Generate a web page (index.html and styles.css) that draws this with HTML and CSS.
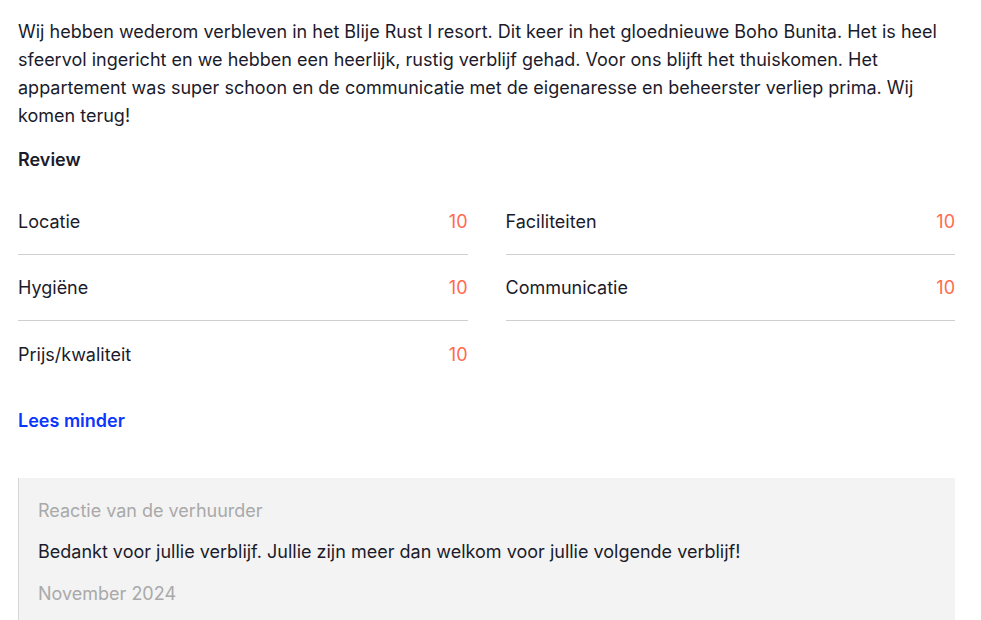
FILE: index.html
```html
<!DOCTYPE html>
<html lang="nl">
<head>
    <meta charset="UTF-8">
    <meta name="viewport" content="width=device-width, initial-scale=1.0">
    <title>Review</title>
    <link rel="stylesheet" href="styles.css">
</head>
<body>
    <div class="review">
        <p class="review-text">Wij hebben wederom verbleven in het Blije Rust I resort. Dit keer in het gloednieuwe Boho Bunita. Het is heel sfeervol ingericht en we hebben een heerlijk, rustig verblijf gehad. Voor ons blijft het thuiskomen. Het appartement was super schoon en de communicatie met de eigenaresse en beheerster verliep prima. Wij komen terug!</p>

        <h3 class="review-title">Review</h3>

        <div class="scores">
            <div class="score-row"><span>Locatie</span><span class="score">10</span></div>
            <div class="score-row"><span>Faciliteiten</span><span class="score">10</span></div>
            <div class="score-row"><span>Hygiëne</span><span class="score">10</span></div>
            <div class="score-row"><span>Communicatie</span><span class="score">10</span></div>
            <div class="score-row last"><span>Prijs/kwaliteit</span><span class="score">10</span></div>
        </div>

        <a class="toggle" href="#">Lees minder</a>

        <div class="reply">
            <div class="reply-label">Reactie van de verhuurder</div>
            <p class="reply-text">Bedankt voor jullie verblijf. Jullie zijn meer dan welkom voor jullie volgende verblijf!</p>
            <div class="reply-date">November 2024</div>
        </div>
    </div>
</body>
</html>
```

FILE: styles.css
```css
body {
    margin: 0;
    padding: 18px 26px 0 18px;
    font-family: Inter, "Open Sans", sans-serif;
    color: #1b1b2b;
    background: #fff;
}
.review-text {
    margin: 0;
    font-size: 18px;
    line-height: 28px;
}
.review-title {
    margin: 16px 0 0;
    font-size: 18px;
    font-weight: 600;
    line-height: 28px;
}
.scores {
    display: grid;
    grid-template-columns: 1fr 1fr;
    column-gap: 38px;
    margin-top: 15px;
}
.score-row {
    display: flex;
    justify-content: space-between;
    align-items: center;
    height: 66px;
    font-size: 18px;
    border-bottom: 1px solid #cfcfcf;
    box-sizing: border-box;
}
.score-row.last {
    border-bottom: none;
}
.score {
    color: #ff6a4d;
}
.toggle {
    display: inline-block;
    margin-top: 23px;
    color: #0a36ff;
    font-size: 18px;
    font-weight: 600;
    text-decoration: none;
}
.reply {
    margin-top: 47px;
    background: #f3f3f3;
    border-left: 1px solid #d6d6d6;
    padding: 21px 19px 20px;
}
.reply-label,
.reply-date {
    color: #a9a9a9;
    font-size: 18px;
    line-height: 24px;
}
.reply-text {
    margin: 17px 0 18px;
    font-size: 18px;
    line-height: 24px;
}
```
